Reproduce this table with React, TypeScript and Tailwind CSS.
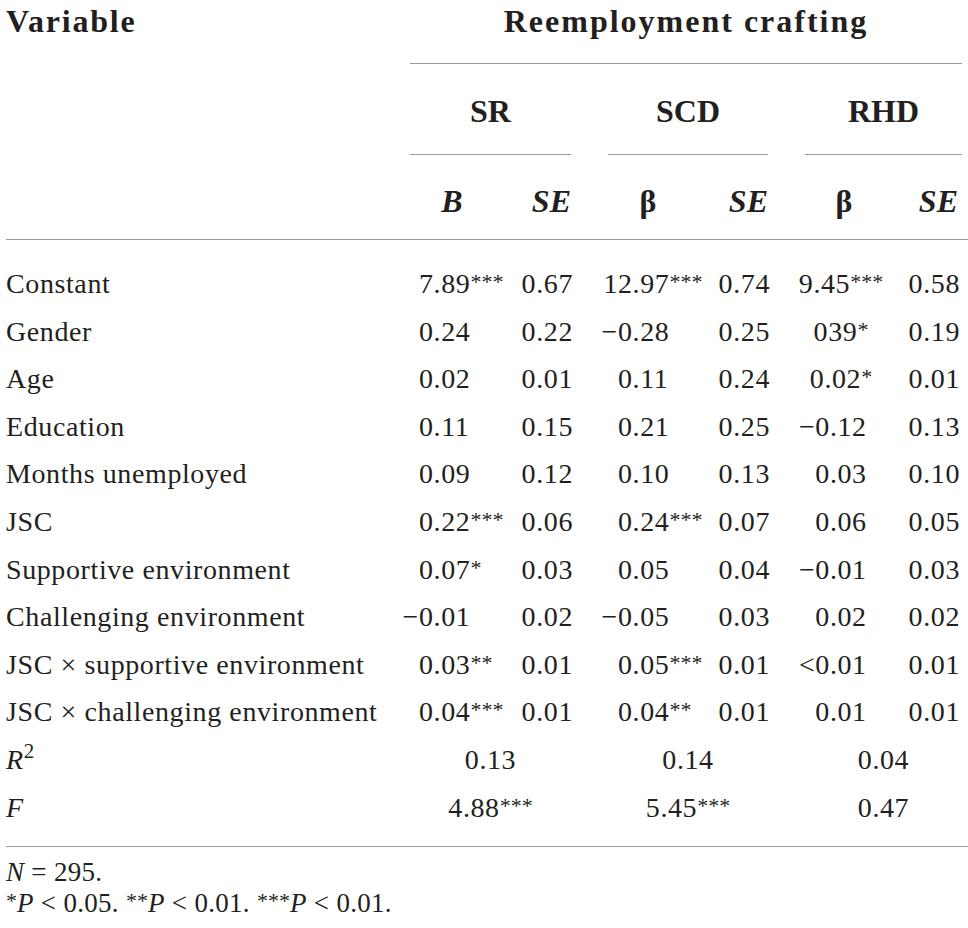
import React from "react";

type Pair = [string, string];
type Row = { label: React.ReactNode; sr: Pair; scd: Pair; rhd: Pair };

const rows: Row[] = [
  { label: "Constant", sr: ["7.89***", "0.67"], scd: ["12.97***", "0.74"], rhd: ["9.45***", "0.58"] },
  { label: "Gender", sr: ["0.24", "0.22"], scd: ["−0.28", "0.25"], rhd: ["039*", "0.19"] },
  { label: "Age", sr: ["0.02", "0.01"], scd: ["0.11", "0.24"], rhd: ["0.02*", "0.01"] },
  { label: "Education", sr: ["0.11", "0.15"], scd: ["0.21", "0.25"], rhd: ["−0.12", "0.13"] },
  { label: "Months unemployed", sr: ["0.09", "0.12"], scd: ["0.10", "0.13"], rhd: ["0.03", "0.10"] },
  { label: "JSC", sr: ["0.22***", "0.06"], scd: ["0.24***", "0.07"], rhd: ["0.06", "0.05"] },
  { label: "Supportive environment", sr: ["0.07*", "0.03"], scd: ["0.05", "0.04"], rhd: ["−0.01", "0.03"] },
  { label: "Challenging environment", sr: ["−0.01", "0.02"], scd: ["−0.05", "0.03"], rhd: ["0.02", "0.02"] },
  { label: "JSC × supportive environment", sr: ["0.03**", "0.01"], scd: ["0.05***", "0.01"], rhd: ["<0.01", "0.01"] },
  { label: "JSC × challenging environment", sr: ["0.04***", "0.01"], scd: ["0.04**", "0.01"], rhd: ["0.01", "0.01"] },
];

const fits: { label: React.ReactNode; values: [string, string, string] }[] = [
  {
    label: (
      <>
        <i>R</i>
        <sup>2</sup>
      </>
    ),
    values: ["0.13", "0.14", "0.04"],
  },
  { label: <i>F</i>, values: ["4.88***", "5.45***", "0.47"] },
];

function Stars({ n }: { n: string }) {
  if (!n) return null;
  return <span className="relative -top-[4px] text-[22px] tracking-[0px]">{n}</span>;
}

// leading chars (minus, "<", extra integer digit) hang left of the column edge
function Num({ v }: { v: string }) {
  const s = v.match(/^(.*?)(\**)$/);
  const body = s ? s[1] : v;
  const stars = s ? s[2] : "";
  const m = body.match(/^(.*?)(\d\.\d.*)$/);
  const hang = m ? m[1] : "";
  const rest = m ? m[2] : body;
  return (
    <span className="whitespace-nowrap">
      {hang && <span className="inline-block w-[40px] -ml-[40px] text-right">{hang}</span>}
      {rest}
      <Stars n={stars} />
    </span>
  );
}

function BodyRow({ row }: { row: Row }) {
  return (
    <div className="flex h-[47.6px] leading-[47.6px]">
      <div className="w-[404px] whitespace-nowrap">{row.label}</div>
      <div className="flex w-[161px]">
        <div className="w-[105px] pl-[9px]">
          <Num v={row.sr[0]} />
        </div>
        <div className="flex-1 text-right -mr-[2px]">{row.sr[1]}</div>
      </div>
      <div className="ml-[37px] flex w-[160px]">
        <div className="w-[105px] pl-[10px]">
          <Num v={row.scd[0]} />
        </div>
        <div className="flex-1 text-right -mr-[2px]">{row.scd[1]}</div>
      </div>
      <div className="ml-[37px] flex w-[157px]">
        <div className="flex w-[72px] justify-center">
          <Num v={row.rhd[0]} />
        </div>
        <div className="flex-1 text-right pr-[2px]">{row.rhd[1]}</div>
      </div>
    </div>
  );
}

export default function App() {
  return (
    <div className="w-[968px] h-[928px] bg-white pl-[6px] text-[#231f20] font-['Liberation_Serif','Times_New_Roman',serif]">
      {/* header */}
      <div className="text-[32px] font-bold leading-[40px]">
        <div className="flex h-[64px]">
          <div className="w-[404px] pt-[1px] tracking-[1.8px]">Variable</div>
          <div className="w-[552px] border-b border-[#9a9a9a] pt-[1px] text-center tracking-[2px]">
            Reemployment crafting
          </div>
        </div>
        <div className="flex h-[91px]">
          <div className="w-[404px]" />
          <div className="w-[161px] border-b border-[#9a9a9a] pt-[27px] text-center">SR</div>
          <div className="ml-[37px] w-[160px] border-b border-[#9a9a9a] pt-[27px] text-center">SCD</div>
          <div className="ml-[37px] w-[157px] border-b border-[#9a9a9a] pt-[27px] text-center">RHD</div>
        </div>
        <div className="flex h-[85px] border-b border-[#9a9a9a] pt-[26px]">
          <div className="w-[404px]" />
          <div className="flex w-[161px]">
            <div className="w-[84px] text-center italic">B</div>
            <div className="flex-1 text-right italic">SE</div>
          </div>
          <div className="ml-[37px] flex w-[160px]">
            <div className="w-[80px] text-center">β</div>
            <div className="flex-1 text-right italic">SE</div>
          </div>
          <div className="ml-[37px] flex w-[157px]">
            <div className="w-[78px] text-center">β</div>
            <div className="flex-1 text-right italic pr-[4px]">SE</div>
          </div>
        </div>
      </div>

      {/* body */}
      <div className="border-b border-[#9a9a9a] pt-[20px] pb-[15px] text-[28px] tracking-[0.6px]">
        {rows.map((r, i) => (
          <BodyRow key={i} row={r} />
        ))}
        {fits.map((f, i) => (
          <div key={i} className="flex h-[47.6px] leading-[47.6px]">
            <div className="w-[404px]">{f.label}</div>
            {f.values.map((v, j) => (
              <div
                key={j}
                className={
                  j === 0
                    ? "w-[161px] text-center"
                    : j === 1
                      ? "ml-[37px] w-[160px] text-center"
                      : "ml-[37px] w-[157px] text-center"
                }
              >
                <Num v={v} />
              </div>
            ))}
          </div>
        ))}
      </div>

      {/* notes */}
      <div className="pt-[10px] text-[27px] leading-[31px] tracking-[0.3px]">
        <p>
          <i>N</i> = 295.
        </p>
        <p>
          <Stars n="*" />
          <i>P</i> &lt; 0.05. <Stars n="**" />
          <i>P</i> &lt; 0.01. <Stars n="***" />
          <i>P</i> &lt; 0.01.
        </p>
      </div>
    </div>
  );
}
